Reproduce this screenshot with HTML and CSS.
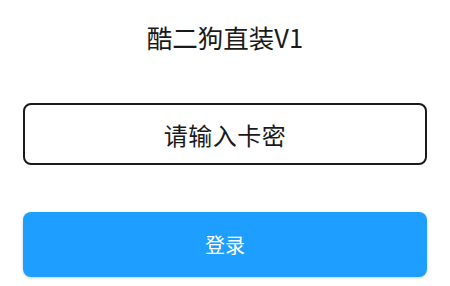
FILE: index.html
```html
<!DOCTYPE html>
<html lang="zh">
<head>
<meta charset="utf-8">
<link rel="stylesheet" href="styles.css">
</head>
<body>
<div class="page">
  <h1 class="title">酷二狗直装V1</h1>
  <div class="input">请输入卡密</div>
  <div class="button">登录</div>
</div>
</body>
</html>
```
FILE: styles.css
```css
html, body {
  margin: 0;
  padding: 0;
  background: #ffffff;
}
.page {
  width: 450px;
  height: 286px;
  box-sizing: border-box;
  padding: 21px 23px 0 23px;
  display: flex;
  flex-direction: column;
  font-family: "Noto Sans CJK SC", "Noto Sans", sans-serif;
}
.title {
  margin: 0;
  height: 32px;
  line-height: 32px;
  font-size: 25.5px;
  font-weight: 400;
  text-align: center;
  color: #1a1a1a;
}
.input {
  margin-top: 50px;
  height: 62px;
  box-sizing: border-box;
  border: 2px solid #1a1a1a;
  border-radius: 8px;
  display: flex;
  align-items: center;
  justify-content: center;
  font-size: 24px;
  letter-spacing: 0.5px;
  color: #1a1a1a;
}
.button {
  margin-top: 47px;
  height: 65px;
  border-radius: 8px;
  background: #1e9fff;
  box-shadow: 0 1px 3px rgba(0, 0, 0, 0.2);
  display: flex;
  align-items: center;
  justify-content: center;
  font-size: 20px;
  color: #ffffff;
}
```
